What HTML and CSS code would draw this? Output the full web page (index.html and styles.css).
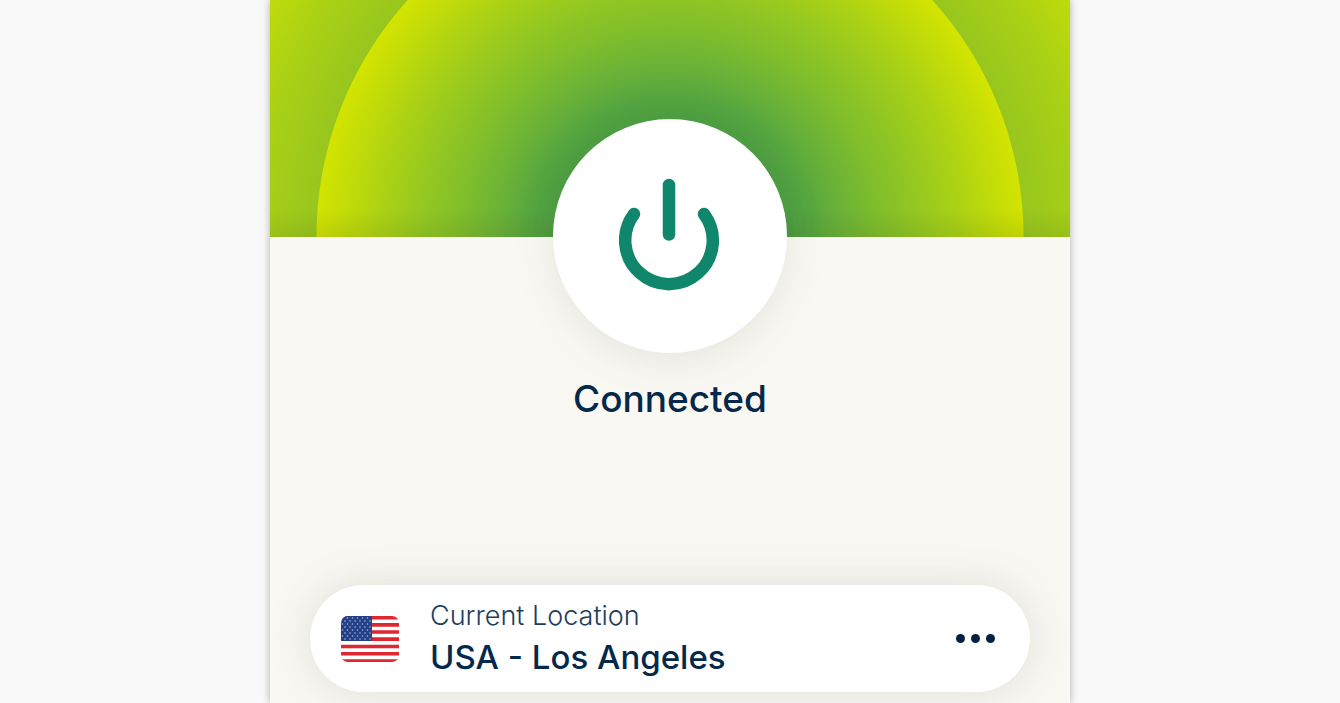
FILE: index.html
```
<!DOCTYPE html>
<html lang="en">
<head>
    <meta charset="UTF-8">
    <meta name="viewport" content="width=device-width, initial-scale=1.0">
    <title>VPN - Connected</title>
    <link rel="stylesheet" href="styles.css">
</head>
<body>
    <main class="app">
        <header class="hero"></header>
        <section class="status">
            <button class="power" type="button" aria-label="Disconnect">
                <svg class="power-icon" viewBox="0 0 102 118" aria-hidden="true">
                    <path d="M50 8v49.500M15 37a43.800 43.800 0 1 0 70 0" />
                </svg>
            </button>
            <h1 class="status-text">Connected</h1>
        </section>
        <section class="location">
            <svg class="flag" viewBox="0 0 58 46" aria-hidden="true">
                <defs>
                    <clipPath id="flag-shape"><rect width="58" height="46" rx="7" /></clipPath>
                    <pattern id="stars" width="5" height="6" patternUnits="userSpaceOnUse">
                        <circle cx="1.500" cy="2" r=".8" />
                        <circle cx="4" cy="5" r=".8" />
                    </pattern>
                </defs>
                <g clip-path="url(#flag-shape)">
                    <rect width="58" height="46" fill="#fff" />
                    <path class="flag-stripes" d="M0 1.800h58M0 8.900h58M0 16h58M0 23.100h58M0 30.500h58M0 37.800h58M0 45h58" />
                    <rect width="31" height="25" fill="#233f86" />
                    <rect width="31" height="25" fill="url(#stars)" />
                </g>
            </svg>
            <div class="location-text">
                <div class="location-label">Current Location</div>
                <div class="location-name">USA - Los Angeles</div>
            </div>
            <button class="more" type="button" aria-label="More options">
                <span class="dot"></span><span class="dot"></span><span class="dot"></span>
            </button>
        </section>
    </main>
</body>
</html>
```
FILE: styles.css
```
* { box-sizing: border-box; }
body { margin: 0; background: #f9f9f9; color: #05294a; font-family: Inter, "Liberation Sans", sans-serif; }
button { border: 0; padding: 0; cursor: pointer; }
.app { max-width: 800px; min-height: 100vh; margin: 0 auto; padding-bottom: 11px; background: #f9f8f3; box-shadow: 0 0 8px rgba(0, 0, 0, 0.3); }
.hero {
    height: 237px;
    background:
        linear-gradient(to top, rgba(70, 90, 20, 0.13), rgba(70, 90, 20, 0) 28px),
        radial-gradient(circle at 50% 100%, #4c9f42 118px, #54a541 138px, #69b138 170px, #80be2b 210px, #95c821 250px, #acd214 290px, #c2dc09 325px, #d3e400 353px, #98c61e 354px, #a8d016 410px, #c2dc0a 470px);
}
.status { display: flex; flex-direction: column; align-items: center; gap: 22px; margin-top: -118px; }
.power { display: flex; align-items: center; justify-content: center; width: 234px; height: 234px; border-radius: 50%; background: #fff; box-shadow: 0 8px 40px rgba(90, 90, 60, 0.12); }
.power-icon { width: 102px; height: 118px; fill: none; stroke: #10866c; stroke-width: 12.5; stroke-linecap: round; }
.status-text { margin: 0; font-size: 37px; font-weight: 500; line-height: 48px; }
.location { display: flex; align-items: center; margin: 162px 40px 0; height: 107px; padding: 0 35px 0 31px; border-radius: 54px; background: #fff; box-shadow: 0 0 44px rgba(90, 90, 60, 0.16); }
.flag { width: 58px; height: 46px; }
#stars circle { fill: #a9bbe0; }
.flag-stripes { stroke: #e02630; stroke-width: 3.6; }
.location-text { flex: 1; margin-left: 31px; padding-bottom: 4px; }
.location-label { color: #1c3d5c; font-size: 27px; font-weight: 300; line-height: 40px; }
.location-name { font-size: 33px; font-weight: 500; line-height: 42px; }
.more { display: flex; gap: 6px; background: none; }
.dot { width: 9px; height: 9px; border-radius: 50%; background: #05213f; }
```
